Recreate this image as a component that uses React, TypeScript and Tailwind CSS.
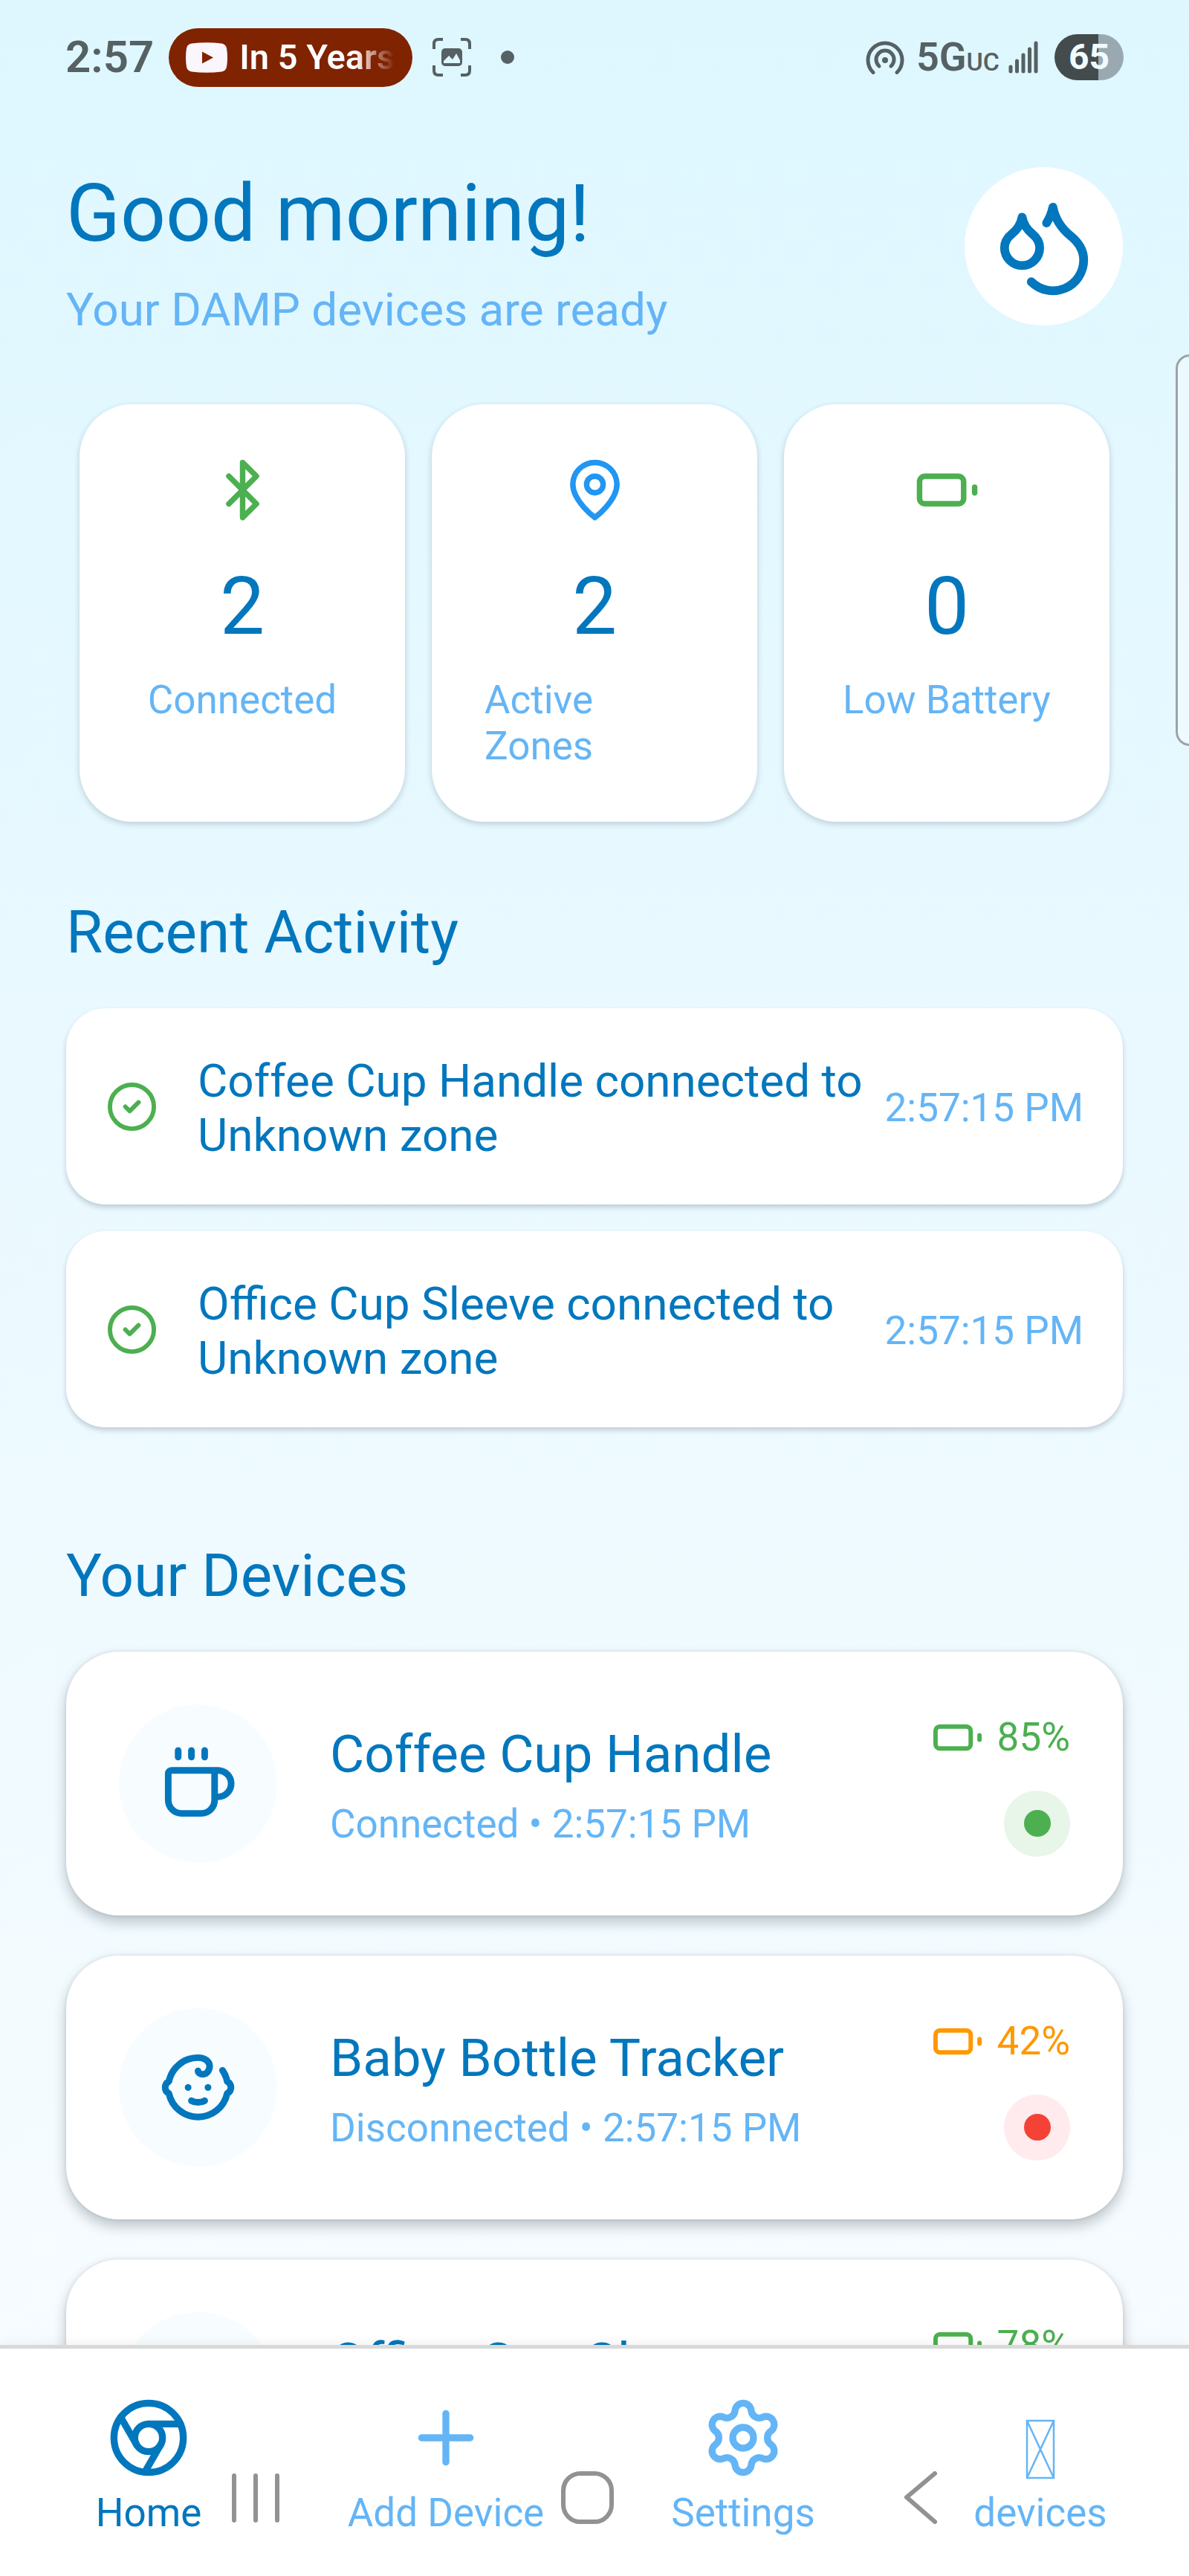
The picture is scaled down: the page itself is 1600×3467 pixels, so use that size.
import React, { useState } from "react";
import { Baby, Bluetooth, CircleCheck, Coffee, Droplets, Plus, Settings } from "lucide-react";

type Device = {
  id: number;
  name: string;
  type: "cup" | "bottle";
  connected: boolean;
  battery: number;
  lastSeen: string;
};

const devices: Device[] = [
  { id: 1, name: "Coffee Cup Handle", type: "cup", connected: true, battery: 85, lastSeen: "2:57:15 PM" },
  { id: 2, name: "Baby Bottle Tracker", type: "bottle", connected: false, battery: 42, lastSeen: "2:57:15 PM" },
  { id: 3, name: "Office Cup Sleeve", type: "cup", connected: true, battery: 78, lastSeen: "2:57:15 PM" },
];

const activities = [
  { id: 1, message: "Coffee Cup Handle connected to Unknown zone", time: "2:57:15 PM" },
  { id: 2, message: "Office Cup Sleeve connected to Unknown zone", time: "2:57:15 PM" },
];

type IconProps = { className?: string };

function Svg({ className, children }: IconProps & { children: React.ReactNode }) {
  return (
    <svg
      viewBox="0 0 24 24"
      fill="none"
      stroke="currentColor"
      strokeWidth="2"
      strokeLinecap="round"
      strokeLinejoin="round"
      className={className}
      aria-hidden="true"
    >
      {children}
    </svg>
  );
}

function BatteryIcon({ className }: IconProps) {
  return (
    <Svg className={className}>
      <rect x="2" y="7" width="16" height="10" rx="2" />
      <path d="M22 11v2" />
    </Svg>
  );
}

function PinIcon({ className }: IconProps) {
  return (
    <Svg className={className}>
      <path d="M20 10c0 6-8 12-8 12s-8-6-8-12a8 8 0 0 1 16 0Z" />
      <circle cx="12" cy="10" r="3" />
    </Svg>
  );
}

function ChromeIcon({ className }: IconProps) {
  return (
    <Svg className={className}>
      <circle cx="12" cy="12" r="10" />
      <circle cx="12" cy="12" r="4" />
      <path d="M21.17 8H12M3.95 6.06 8.54 14M10.88 21.94 15.46 14" />
    </Svg>
  );
}

function MissingIcon({ className }: IconProps) {
  return (
    <svg viewBox="0 0 112 112" fill="none" stroke="currentColor" strokeWidth="2.5" className={className} aria-hidden="true">
      <path d="M38 33h36v77H38zM38 33l36 77M74 33l-36 77" />
    </svg>
  );
}

function StatusBar() {
  return (
    <div className="flex h-[154px] shrink-0 items-center justify-between px-[88px] text-[#566164]">
      <div className="flex items-center">
        <span className="text-[60px] font-semibold leading-none">2:57</span>
        <div className="ml-5 flex h-[79px] w-[328px] items-center rounded-full bg-[#802300] pl-[23px]">
          <svg viewBox="0 0 56 41" className="h-[41px] w-[56px]" aria-hidden="true">
            <path
              d="M8 1.500Q28-1 48 1.500Q54 2.500 55 8Q57 20 55 33Q54 38.500 48 39.500Q28 42 8 39.500Q2 38.500 1 33Q-1 20 1 8Q2 2.500 8 1.500Z"
              fill="#fbf5fc"
            />
            <path d="M22 12.500v16l15-8z" fill="#802300" />
          </svg>
          <span className="ml-4 w-[208px] overflow-hidden whitespace-nowrap bg-linear-to-r from-white from-75% to-[#802300] bg-clip-text text-[47px] font-semibold leading-[60px] text-transparent">
            In 5 Years
          </span>
        </div>
        <svg viewBox="0 0 52 52" fill="none" className="ml-[27px] size-[52px]" aria-hidden="true">
          <path
            d="M2 15V8q0-6 6-6h6M38 2h6q6 0 6 6v7M50 37v7q0 6-6 6h-6M14 50H8q-6 0-6-6v-7"
            stroke="currentColor"
            strokeWidth="4"
          />
          <rect x="12" y="14" width="28" height="24" rx="5" fill="currentColor" />
          <path d="M15 34v-3l7-7 5 5 5-8 5 9v4z" fill="#dff7ff" />
        </svg>
        <span className="ml-10 size-[18px] rounded-full bg-[#566164]" />
      </div>

      <div className="flex items-center">
        <svg viewBox="0 0 52 46" fill="none" stroke="currentColor" strokeWidth="5" className="h-[46px] w-[52px]" aria-hidden="true">
          <path d="M10 43.500A23 23 0 1 1 42 43.500" strokeLinecap="round" />
          <path d="M18 35A12 12 0 1 1 34 35" strokeLinecap="round" />
          <circle cx="26" cy="27" r="4" fill="currentColor" stroke="none" />
        </svg>
        <span className="ml-4 flex items-baseline leading-none">
          <span className="text-[54px] font-semibold">5G</span>
          <span className="text-[34px] font-medium">UC</span>
        </span>
        <svg viewBox="0 0 40 44" stroke="currentColor" strokeWidth="5" strokeLinecap="round" className="ml-3 h-[44px] w-[40px]" aria-hidden="true">
          <path d="M3 35v6M11.500 27v14M20 19v22M28.500 11v30M37 3v38" />
        </svg>
        <span className="ml-[22px] flex h-[62px] w-[93px] items-center justify-center rounded-full bg-linear-to-r from-[#444b4d] from-63% to-[#9aa9b1] to-63% text-[48px] font-bold leading-none text-[#f0fbff]">
          65
        </span>
      </div>
    </div>
  );
}

function StatCard({ icon, value, label }: { icon: React.ReactNode; value: number; label: string }) {
  return (
    <div className="flex flex-1 flex-col items-center rounded-[71px] bg-white p-[71px] shadow-[0_3px_9px_rgba(0,40,60,0.2)]">
      {icon}
      <p className="mt-[50px] text-[107px] leading-[125px] text-[#0277bd]">{value}</p>
      <p className="mt-8 text-[53px] leading-[62px] text-[#64b5f6]">{label}</p>
    </div>
  );
}

function DeviceCard({ device }: { device: Device }) {
  const Icon = device.type === "cup" ? Coffee : Baby;

  return (
    <li className="flex items-center rounded-[71px] bg-white p-[71px] shadow-[0_9px_18px_rgba(0,20,30,0.24),0_0_5px_rgba(0,20,30,0.1)]">
      <div className="flex size-[213px] shrink-0 items-center justify-center rounded-full bg-[#f7fcff]">
        <Icon className="size-[107px] text-[#0277bd]" />
      </div>
      <div className="ml-[71px] flex-1">
        <h3 className="text-[71px] leading-[90px] text-[#0277bd]">{device.name}</h3>
        <p className="mt-[18px] text-[53px] leading-[62px] text-[#64b5f6]">
          {device.connected ? "Connected" : "Disconnected"} • {device.lastSeen}
        </p>
      </div>
      <div className="flex flex-col items-end gap-9">
        <div className={`flex items-center gap-[18px] ${device.battery > 50 ? "text-[#4caf50]" : "text-[#ff9800]"}`}>
          <BatteryIcon className="size-[71px]" />
          <span className="text-[53px] leading-[62px]">{device.battery}%</span>
        </div>
        <div
          className={`flex size-[89px] items-center justify-center rounded-full ${
            device.connected ? "bg-[#e8f5e9]" : "bg-[#ffebee]"
          }`}
        >
          <span className={`size-[36px] rounded-full ${device.connected ? "bg-[#4caf50]" : "bg-[#f44336]"}`} />
        </div>
      </div>
    </li>
  );
}

const tabs = [
  { name: "Home", Icon: ChromeIcon },
  { name: "Add Device", Icon: Plus },
  { name: "Settings", Icon: Settings },
  { name: "devices", Icon: MissingIcon },
];

export default function App() {
  const [activeTab, setActiveTab] = useState("Home");

  return (
    <div className="relative flex h-screen flex-col overflow-hidden bg-linear-to-b from-[#def7ff] to-[#f9fcff] font-[Roboto,sans-serif]">
      <StatusBar />

      <main className="min-h-0 flex-1 overflow-hidden px-[89px] pt-[71px]">
        <header className="flex items-start justify-between">
          <div>
            <h1 className="text-[107px] leading-[125px] text-[#0277bd]">Good morning!</h1>
            <p className="mt-[30px] text-[62px] leading-[73px] text-[#64b5f6]">Your DAMP devices are ready</p>
          </div>
          <div className="flex size-[213px] shrink-0 items-center justify-center rounded-full bg-white">
            <Droplets className="size-[142px] text-[#0277bd]" />
          </div>
        </header>

        <section className="mx-[18px] mt-[91px] flex gap-9">
          <StatCard icon={<Bluetooth className="size-[89px] text-[#4caf50]" />} value={2} label="Connected" />
          <StatCard icon={<PinIcon className="size-[89px] text-[#2196f3]" />} value={2} label="Active Zones" />
          <StatCard icon={<BatteryIcon className="size-[89px] text-[#4caf50]" />} value={0} label="Low Battery" />
        </section>

        <section className="mt-[102px]">
          <h2 className="text-[80px] leading-[94px] text-[#0277bd]">Recent Activity</h2>
          <ul className="mt-[55px] space-y-9">
            {activities.map((activity) => (
              <li
                key={activity.id}
                className="flex items-center rounded-[53px] bg-white px-[53px] py-[57px] shadow-[0_4px_7px_rgba(0,30,45,0.2)]"
              >
                <CircleCheck className="size-[71px] shrink-0 text-[#4caf50]" />
                <p className="ml-[53px] flex-1 pt-1 text-[62px] leading-[73px] text-[#0277bd]">{activity.message}</p>
                <time className="whitespace-nowrap pt-1 text-[53px] leading-[62px] text-[#64b5f6]">{activity.time}</time>
              </li>
            ))}
          </ul>
        </section>

        <section className="mt-[153px]">
          <h2 className="text-[80px] leading-[94px] text-[#0277bd]">Your Devices</h2>
          <ul className="mt-[55px] space-y-[54px]">
            {devices.map((device) => (
              <DeviceCard key={device.id} device={device} />
            ))}
          </ul>
        </section>
      </main>

      <nav className="relative grid shrink-0 grid-cols-4 border-t-[5px] border-[#d9d9d9] bg-white pb-[54px] pt-16 shadow-[0_-2px_16px_rgba(0,0,0,0.06)]">
        {tabs.map(({ name, Icon }) => (
          <button
            key={name}
            type="button"
            onClick={() => setActiveTab(name)}
            className={`flex flex-col items-center gap-[14px] ${activeTab === name ? "text-[#0277bd]" : "text-[#64b5f6]"}`}
          >
            <Icon className="size-[112px]" />
            <span className="text-[53px] leading-[62px]">{name}</span>
          </button>
        ))}

        {/* Android system buttons, drawn over the tab bar */}
        <button type="button" aria-label="Recent apps" className="absolute bottom-[72px] left-[312px] flex h-[66px] w-[64px] justify-between">
          <span className="h-full w-[6px] rounded-full bg-[#929292]" />
          <span className="h-full w-[6px] rounded-full bg-[#929292]" />
          <span className="h-full w-[6px] rounded-full bg-[#929292]" />
        </button>
        <button
          type="button"
          aria-label="Home screen"
          className="absolute bottom-[70px] left-[755px] size-[71px] rounded-[26px] border-[6px] border-[#929292]"
        />
        <button type="button" aria-label="Back" className="absolute bottom-[70px] right-[338px] h-[71px] w-[46px]">
          <svg viewBox="0 0 46 71" fill="none" stroke="#929292" strokeWidth="6" strokeLinecap="round" strokeLinejoin="round" aria-hidden="true">
            <path d="M42 3 4 35l38 33" />
          </svg>
        </button>
      </nav>

      {/* Edge panel handle */}
      <div className="absolute -right-5 top-[477px] h-[527px] w-[38px] rounded-[20px] border-[3px] border-[#9ca3a6] bg-white/30" />
    </div>
  );
}
